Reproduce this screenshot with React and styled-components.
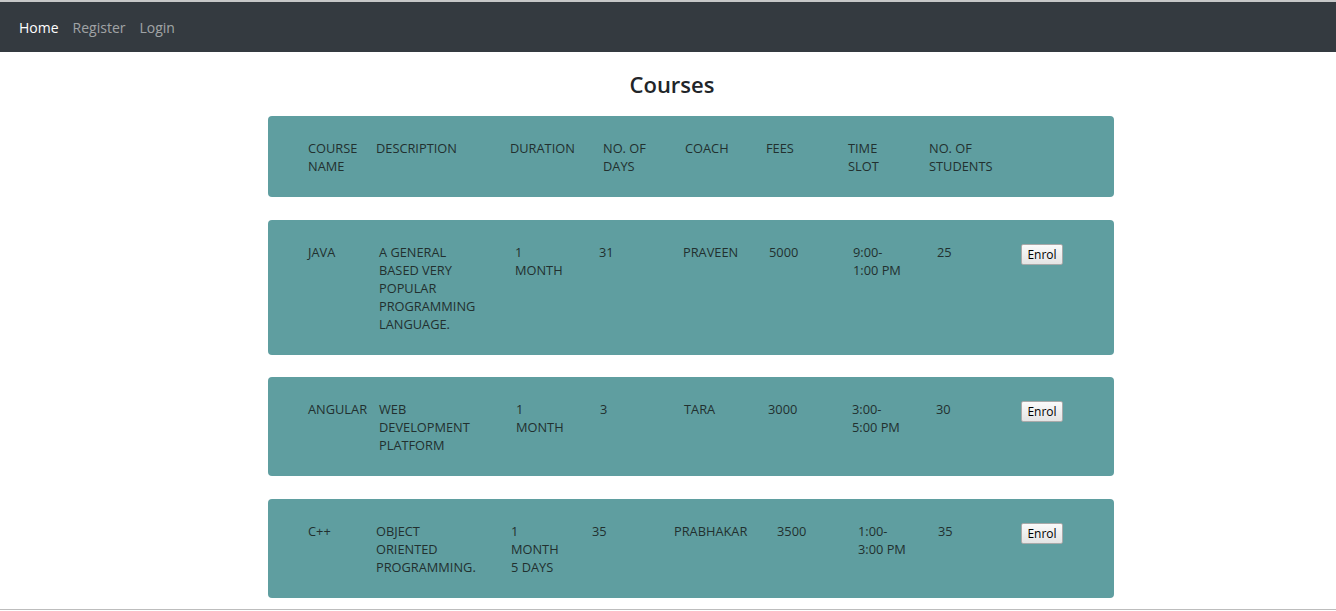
import React from 'react';
import styled, { createGlobalStyle } from 'styled-components';

const GlobalStyle = createGlobalStyle`
  body {
    margin: 0;
    background: #fff;
    font-family: "Open Sans", "Noto Sans", "Liberation Sans", sans-serif;
    color: #212529;
  }
`;

const courses = [
  {
    name: 'JAVA',
    description: 'A GENERAL BASED VERY POPULAR PROGRAMMING LANGUAGE.',
    duration: ['1', 'MONTH'],
    days: '31',
    coach: 'PRAVEEN',
    fees: '5000',
    slot: ['9:00-', '1:00 PM'],
    students: '25',
    cols: '71px 136px 84px 84px 86px 84px 84px 84px auto',
  },
  {
    name: 'ANGULAR',
    description: 'WEB DEVELOPMENT PLATFORM',
    duration: ['1', 'MONTH'],
    days: '3',
    coach: 'TARA',
    fees: '3000',
    slot: ['3:00-', '5:00 PM'],
    students: '30',
    cols: '71px 137px 84px 84px 84px 84px 84px 85px auto',
  },
  {
    name: 'C++',
    description: 'OBJECT ORIENTED PROGRAMMING.',
    duration: ['1', 'MONTH', '5 DAYS'],
    days: '35',
    coach: 'PRABHAKAR',
    fees: '3500',
    slot: ['1:00-', '3:00 PM'],
    students: '35',
    cols: '68px 135px 81px 82px 103px 81px 80px 83px auto',
  },
];

export default function App() {
  return (
    <Page>
      <GlobalStyle />
      <Navbar>
        <NavLink active>Home</NavLink>
        <NavLink>Register</NavLink>
        <NavLink>Login</NavLink>
      </Navbar>
      <Title>Courses</Title>
      <Main>
        <Card>
          <Row cols="68px 134px 93px 82px 81px 82px 81px auto">
            <Cell>COURSE<br />NAME</Cell>
            <Cell>DESCRIPTION</Cell>
            <Cell>DURATION</Cell>
            <Cell>NO. OF<br />DAYS</Cell>
            <Cell>COACH</Cell>
            <Cell>FEES</Cell>
            <Cell>TIME<br />SLOT</Cell>
            <Cell>NO. OF<br />STUDENTS</Cell>
          </Row>
        </Card>
        {courses.map((c) => (
          <Card key={c.name}>
            <Row cols={c.cols}>
              <Cell>{c.name}</Cell>
              <Cell>
                <Description>{c.description}</Description>
              </Cell>
              <Cell>
                {c.duration.map((d) => (
                  <div key={d}>{d}</div>
                ))}
              </Cell>
              <Cell>{c.days}</Cell>
              <Cell>{c.coach}</Cell>
              <Cell>{c.fees}</Cell>
              <Cell>
                {c.slot.map((s) => (
                  <div key={s}>{s}</div>
                ))}
              </Cell>
              <Cell>{c.students}</Cell>
              <Cell>
                <EnrolButton>Enrol</EnrolButton>
              </Cell>
            </Row>
          </Card>
        ))}
      </Main>
    </Page>
  );
}

const Page = styled.div`
  height: 607px;
  border-top: 2px solid #c6c7c8;
  border-bottom: 1px solid #bdbdbd;
  overflow: hidden;
`;

const Navbar = styled.nav`
  height: 50px;
  background: #343a40;
  display: flex;
  align-items: center;
  gap: 14px;
  padding: 0 19px;
`;

const NavLink = styled.a`
  font-size: 14px;
  color: ${(p) => (p.active ? '#ffffff' : 'rgba(255, 255, 255, 0.55)')};
  text-decoration: none;
  cursor: pointer;
`;

const Title = styled.h2`
  margin: 19px 0 19px 8px;
  text-align: center;
  font-size: 22px;
  font-weight: 600;
  line-height: 26px;
  color: #212529;
`;

const Main = styled.main`
  width: 846px;
  margin-left: 268px;
`;

const Card = styled.div`
  background: #5f9ea0;
  border-radius: 4px;
  padding: 23px 0 22px 40px;
  margin-bottom: 22.5px;
`;

const Row = styled.div`
  display: grid;
  grid-template-columns: ${(p) => p.cols};
  align-items: start;
`;

const Cell = styled.div`
  font-size: 12.8px;
  line-height: 18px;
  color: #22302f;
  padding-right: 4px;
`;

const Description = styled.div`
  max-width: 101px;
`;

const EnrolButton = styled.button`
  margin-top: 1px;
  width: 42px;
  height: 21px;
  padding: 0;
  font-family: "Open Sans", "Noto Sans", sans-serif;
  font-size: 12px;
  color: #000;
  background: linear-gradient(#fafafa, #e4e4e4);
  border: 1px solid #a9a9a9;
  border-radius: 2px;
`;
